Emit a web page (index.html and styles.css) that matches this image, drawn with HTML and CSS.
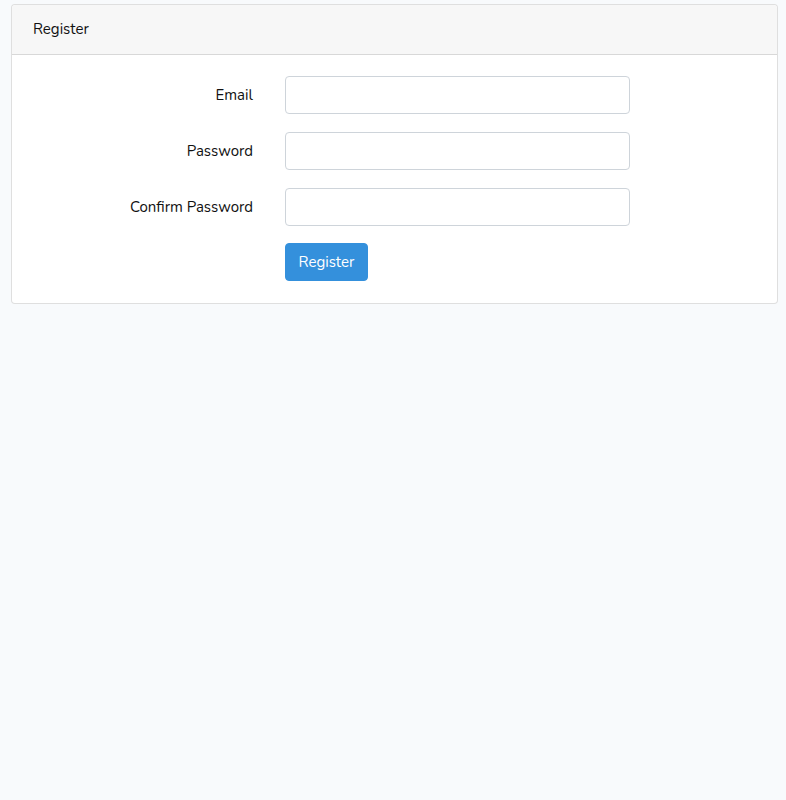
FILE: index.html
```html
<!DOCTYPE html>
<html lang="en">
<head>
<meta charset="utf-8">
<title>Register</title>
<link rel="stylesheet" href="styles.css">
</head>
<body>
<div class="card">
  <div class="card-header">Register</div>
  <div class="card-body">
    <form class="form">
      <div class="row">
        <label class="label" for="email">Email</label>
        <input class="input" id="email" type="email">
      </div>
      <div class="row">
        <label class="label" for="password">Password</label>
        <input class="input" id="password" type="password">
      </div>
      <div class="row">
        <label class="label" for="confirm">Confirm Password</label>
        <input class="input" id="confirm" type="password">
      </div>
      <div class="row row-last">
        <span class="label"></span>
        <button class="btn" type="button">Register</button>
      </div>
    </form>
  </div>
</div>
</body>
</html>
```

FILE: styles.css
```css
html, body {
  margin: 0;
  padding: 0;
  background: #f8fafc;
  font-family: "Nunito", "Noto Sans", "Open Sans", sans-serif;
  font-size: 15px;
  color: #111;
}
.card {
  margin: 4px 8px 0 11px;
  background: #fff;
  border: 1px solid rgba(0,0,0,0.125);
  border-radius: 4px;
}
.card-header {
  height: 50px;
  box-sizing: border-box;
  padding: 0 21px 2px;
  display: flex;
  align-items: center;
  background: #f7f7f7;
  border-bottom: 1px solid rgba(0,0,0,0.125);
  border-radius: 4px 4px 0 0;
}
.card-body {
  padding: 21px 20px 21px 20px;
}
.form {
  display: flex;
  flex-direction: column;
  gap: 18px;
}
.row {
  display: grid;
  grid-template-columns: 221px 345px;
  column-gap: 32px;
  align-items: center;
}
.row-last {
  margin-top: -1px;
  margin-bottom: 1px;
}
.label {
  text-align: right;
}
.input {
  height: 38px;
  box-sizing: border-box;
  border: 1px solid #ced4da;
  border-radius: 4px;
  background: #fff;
  margin: 0;
  padding: 6px 12px;
  font: inherit;
}
.btn {
  justify-self: start;
  width: 83px;
  height: 38px;
  box-sizing: border-box;
  background: #3490dc;
  border: 1px solid #3490dc;
  border-radius: 4px;
  color: #fff;
  font: inherit;
  font-size: 15px;
  padding: 0;
}
```
